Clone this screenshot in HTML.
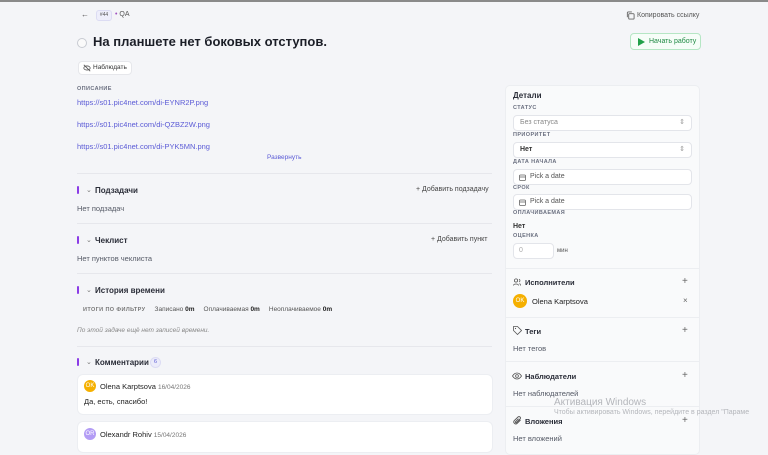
<!DOCTYPE html>
<html><head><meta charset="utf-8"><style>
*{margin:0;padding:0;box-sizing:border-box}
body{width:768px;height:444px;overflow:hidden;background:#f4f5f8;font-family:"Liberation Sans","Noto Sans CJK SC",sans-serif;color:#1f2330;position:relative;font-size:7.5px}
.a{position:absolute;white-space:nowrap}
.topline{position:absolute;left:0;top:0;width:768px;height:2px;background:#8a8a8a}
.lbl{font-size:5.5px;font-weight:bold;color:#6b7080;letter-spacing:.4px}
.link{color:#5b5bd6;font-size:7.5px}
.sep{position:absolute;left:77px;width:415px;height:1px;background:#e6e7ec}
.bar{position:absolute;width:2px;height:8px;background:#8b3ce6;border-radius:1px}
.h{font-weight:bold;font-size:8px;color:#2a2d38}
.chev{color:#777;font-size:7px}
.muted{color:#555a66;font-size:7.5px}
.card{position:absolute;background:#fff;border-radius:5px;box-shadow:0 0 0 1px #eceef2}
.inp{position:absolute;left:513px;width:179px;height:16px;background:#fff;border:1px solid #e3e5ea;border-radius:4px;font-size:7px;color:#333}
.rs{position:absolute;left:505px;width:195px;height:1px;background:#eceef1}
.av{position:absolute;border-radius:50%;color:#fff;font-size:6px;text-align:center}
.plus{color:#666;font-size:10px}
</style></head><body>
<div class="topline"></div>
<div class="a" style="left:81px;top:10px;font-size:8px;color:#555">←</div>
<div class="a" style="left:96px;top:10px;width:16px;height:11px;border:1px solid #dcdcf3;background:#eeeefb;border-radius:3px;font-size:5px;color:#555;text-align:center;line-height:9px">#44</div>
<div class="a" style="left:115px;top:11px;font-size:7px;color:#555"><span style="color:#a050c0">•</span> QA</div>
<svg class="a" style="left:626px;top:11px" width="9" height="9" viewBox="0 0 10 10"><rect x="3" y="3" width="6" height="6" rx="1" fill="none" stroke="#666"/><path d="M1.5 7V2a1 1 0 0 1 1-1h4" fill="none" stroke="#666"/></svg>
<div class="a" style="left:637px;top:12px;font-size:7px;color:#555">Копировать ссылку</div>
<div class="a" style="left:630px;top:33px;width:71px;height:17px;border:1px solid #b5e6c4;border-radius:4px;background:#f6fdf8"></div>
<svg class="a" style="left:638px;top:38px" width="7" height="8"><path d="M0 0L7 4L0 8Z" fill="#22a04a"/></svg>
<div class="a" style="left:649px;top:38px;font-size:7px;color:#1f8a43">Начать работу</div>
<div class="a" style="left:77px;top:38px;width:10px;height:10px;border:1px solid #c8cbd2;border-radius:50%;background:#fafafa"></div>
<div class="a" style="left:93px;top:34px;font-size:13px;font-weight:bold;color:#1b1e27">На планшете нет боковых отступов.</div>
<div class="a" style="left:78px;top:61px;width:54px;height:14px;background:#fff;border:1px solid #e6e7eb;border-radius:4px"></div>
<svg class="a" style="left:83px;top:64px" width="8" height="8" viewBox="0 0 10 10"><ellipse cx="5" cy="5" rx="4" ry="2.6" fill="none" stroke="#555"/><path d="M1 1L9 9" stroke="#555"/></svg>
<div class="a" style="left:93px;top:64px;font-size:6.5px;color:#333">Наблюдать</div>
<div class="a lbl" style="left:77px;top:86px">ОПИСАНИЕ</div>
<div class="a link" style="left:77px;top:98px">https://s01.pic4net.com/di-EYNR2P.png</div>
<div class="a link" style="left:77px;top:120px">https://s01.pic4net.com/di-QZBZ2W.png</div>
<div class="a link" style="left:77px;top:142px">https://s01.pic4net.com/di-PYK5MN.png</div>
<div class="a" style="left:267px;top:154px;font-size:6.5px;color:#5b5bd6">Развернуть</div>
<div class="sep" style="top:173px"></div>
<div class="bar" style="left:77px;top:186px"></div><div class="a chev" style="left:86px;top:186px">⌄</div>
<div class="a h" style="left:95px;top:186px">Подзадачи</div>
<div class="a" style="left:416px;top:186px;font-size:7px;color:#444">+ Добавить подзадачу</div>
<div class="a muted" style="left:77px;top:204px">Нет подзадач</div>
<div class="sep" style="top:223px"></div>
<div class="bar" style="left:77px;top:236px"></div><div class="a chev" style="left:86px;top:236px">⌄</div>
<div class="a h" style="left:95px;top:236px">Чеклист</div>
<div class="a" style="left:431px;top:236px;font-size:7px;color:#444">+ Добавить пункт</div>
<div class="a muted" style="left:77px;top:254px">Нет пунктов чеклиста</div>
<div class="sep" style="top:273px"></div>
<div class="bar" style="left:77px;top:286px"></div><div class="a chev" style="left:86px;top:286px">⌄</div>
<div class="a h" style="left:95px;top:286px">История времени</div>
<div class="a" style="left:83px;top:306px;font-size:6.5px;color:#555"><span style="font-size:5.5px;font-weight:bold;letter-spacing:.4px;color:#777">ИТОГИ ПО ФИЛЬТРУ</span>&nbsp;&nbsp;&nbsp;&nbsp; Записано <b style="color:#222">0m</b>&nbsp;&nbsp;&nbsp;&nbsp; Оплачиваемая <b style="color:#222">0m</b>&nbsp;&nbsp;&nbsp;&nbsp; Неоплачиваемое <b style="color:#222">0m</b></div>
<div class="a" style="left:77px;top:327px;font-size:6.5px;color:#888;font-style:italic">По этой задаче ещё нет записей времени.</div>
<div class="sep" style="top:346px"></div>
<div class="bar" style="left:77px;top:358px"></div><div class="a chev" style="left:86px;top:358px">⌄</div>
<div class="a h" style="left:95px;top:358px">Комментарии</div>
<div class="a" style="left:150px;top:357px;width:11px;height:11px;border-radius:50%;background:#ececfa;border:1px solid #dcdcf4;font-size:5.5px;color:#5b5bd6;text-align:center;line-height:9px">6</div>
<div class="card" style="left:78px;top:375px;width:414px;height:39px"></div>
<div class="av" style="left:84px;top:380px;width:12px;height:12px;background:#f5b000;line-height:12px">OK</div>
<div class="a" style="left:100px;top:382px;font-size:7.5px;color:#222">Olena Karptsova <span style="font-size:6.5px;color:#777">16/04/2026</span></div>
<div class="a" style="left:84px;top:397px;font-size:7.5px;color:#222">Да, есть, спасибо!</div>
<div class="card" style="left:78px;top:422px;width:414px;height:30px"></div>
<div class="av" style="left:84px;top:428px;width:12px;height:12px;background:#b39cf5;line-height:12px">OR</div>
<div class="a" style="left:100px;top:430px;font-size:7.5px;color:#222">Olexandr Rohiv <span style="font-size:6.5px;color:#777">15/04/2026</span></div>
<!-- right panel -->
<div class="a" style="left:505px;top:85px;width:195px;height:370px;background:#f9fafb;border:1px solid #eceef1;border-radius:5px"></div>
<div class="a h" style="left:513px;top:91px">Детали</div>
<div class="a lbl" style="left:513px;top:105px">СТАТУС</div>
<div class="inp" style="top:115px"><span class="a" style="left:6px;top:3px;color:#888">Без статуса</span><span class="a" style="right:6px;top:2px;color:#999;font-size:7px">⇕</span></div>
<div class="a lbl" style="left:513px;top:132px">ПРИОРИТЕТ</div>
<div class="inp" style="top:142px"><span class="a" style="left:6px;top:3px;font-weight:bold">Нет</span><span class="a" style="right:6px;top:2px;color:#999;font-size:7px">⇕</span></div>
<div class="a lbl" style="left:513px;top:159px">ДАТА НАЧАЛА</div>
<div class="inp" style="top:169px"><svg class="a" style="left:5px;top:4px" width="7" height="7" viewBox="0 0 7 7"><rect x=".5" y="1" width="6" height="5.5" rx="1" fill="none" stroke="#666" stroke-width=".8"/><path d="M.5 3H6.5" stroke="#666" stroke-width=".8"/></svg><span class="a" style="left:16px;top:3px;color:#555">Pick a date</span></div>
<div class="a lbl" style="left:513px;top:185px">СРОК</div>
<div class="inp" style="top:194px"><svg class="a" style="left:5px;top:4px" width="7" height="7" viewBox="0 0 7 7"><rect x=".5" y="1" width="6" height="5.5" rx="1" fill="none" stroke="#666" stroke-width=".8"/><path d="M.5 3H6.5" stroke="#666" stroke-width=".8"/></svg><span class="a" style="left:16px;top:3px;color:#555">Pick a date</span></div>
<div class="a lbl" style="left:513px;top:210px">ОПЛАЧИВАЕМАЯ</div>
<div class="a" style="left:513px;top:223px;font-size:7px;font-weight:bold;color:#333">Нет</div>
<div class="a lbl" style="left:513px;top:233px">ОЦЕНКА</div>
<div class="inp" style="top:243px;width:41px"><span class="a" style="left:5px;top:3px;color:#aaa">0</span></div>
<div class="a" style="left:557px;top:248px;font-size:6px;color:#555">мин</div>
<div class="rs" style="top:268px"></div>
<svg class="a" style="left:513px;top:278px" width="8" height="8" viewBox="0 0 8 8"><circle cx="3" cy="2.5" r="1.6" fill="none" stroke="#555" stroke-width=".8"/><path d="M.5 7.5C.5 5.5 5.5 5.5 5.5 7.5M6 1.2A1.5 1.5 0 0 1 6 4M6.5 5.5C7.5 6 7.5 7 7.5 7.5" fill="none" stroke="#555" stroke-width=".8"/></svg>
<div class="a h" style="left:525px;top:278px;font-size:7.5px">Исполнители</div>
<div class="a plus" style="left:682px;top:276px">+</div>
<div class="av" style="left:513px;top:294px;width:14px;height:14px;background:#f5b000;line-height:14px">OK</div>
<div class="a" style="left:532px;top:297px;font-size:7.5px;color:#222">Olena Karptsova</div>
<div class="a" style="left:683px;top:296px;font-size:8px;color:#666">×</div>
<div class="rs" style="top:317px"></div>
<svg class="a" style="left:513px;top:326px" width="9" height="9" viewBox="0 0 9 9"><path d="M.5 .5H4.5L8.5 4.5L4.5 8.5L.5 4.5Z" fill="none" stroke="#555" stroke-width=".8"/><circle cx="2.5" cy="2.5" r=".6" fill="#555"/></svg>
<div class="a h" style="left:525px;top:327px;font-size:7.5px">Теги</div>
<div class="a plus" style="left:682px;top:325px">+</div>
<div class="a muted" style="left:513px;top:344px">Нет тегов</div>
<div class="rs" style="top:361px"></div>
<svg class="a" style="left:512px;top:372px" width="10" height="8" viewBox="0 0 10 8"><path d="M.5 4C3 0 7 0 9.5 4C7 8 3 8 .5 4Z" fill="none" stroke="#555" stroke-width=".8"/><circle cx="5" cy="4" r="1.4" fill="none" stroke="#555" stroke-width=".8"/></svg>
<div class="a h" style="left:525px;top:372px;font-size:7.5px">Наблюдатели</div>
<div class="a plus" style="left:682px;top:370px">+</div>
<div class="a muted" style="left:513px;top:389px">Нет наблюдателей</div>
<div class="rs" style="top:406px"></div>
<svg class="a" style="left:513px;top:416px" width="9" height="9" viewBox="0 0 9 9"><path d="M7.5 4L4 7.5A2 2 0 0 1 1.2 4.7L5 1A1.3 1.3 0 0 1 7 3L3.5 6.5A.6.6 0 0 1 2.6 5.6L5.5 2.7" fill="none" stroke="#555" stroke-width=".9"/></svg>
<div class="a h" style="left:525px;top:417px;font-size:7.5px">Вложения</div>
<div class="a plus" style="left:682px;top:415px">+</div>
<div class="a muted" style="left:513px;top:434px">Нет вложений</div>
<div class="a" style="left:554px;top:397px;font-size:10px;color:#b4b6bb">Активация Windows</div>
<div class="a" style="left:554px;top:409px;font-size:7px;color:#b4b6bb">Чтобы активировать Windows, перейдите в раздел "Параме</div>
</body></html>
